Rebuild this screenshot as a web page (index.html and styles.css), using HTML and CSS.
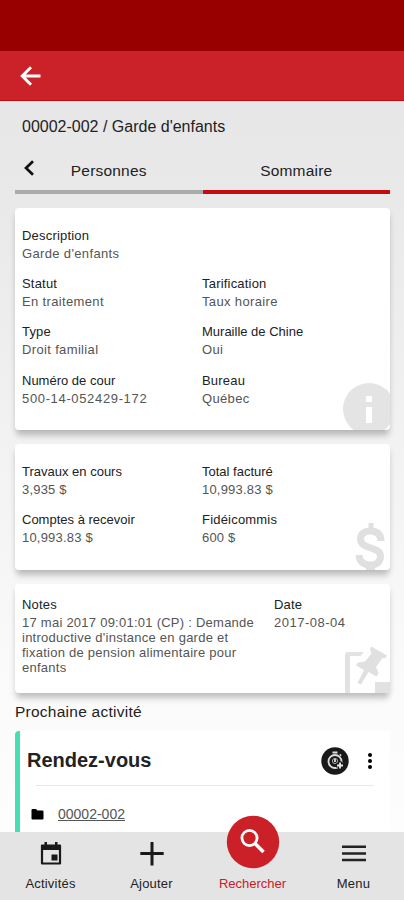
FILE: index.html
```html
<!DOCTYPE html>
<html lang="fr">
<head>
    <meta charset="UTF-8">
    <title>Garde d'enfants</title>
    <link rel="stylesheet" href="styles.css">
</head>
<body>
<div class="status"></div>
<div class="header">
    <svg width="22" height="22" viewBox="0 0 22 22"><path d="M20.5 11H2.500M11 2.200L2.200 11l8.800 8.800" fill="none" stroke="#fff" stroke-width="2.900"/></svg>
</div>

<div class="content">
    <h1>00002-002 / Garde d'enfants</h1>
    <div class="tabs">
        <svg class="prev" width="12" height="16" viewBox="0 0 12 16"><path d="M10 1.200L3 8l7 6.800" fill="none" stroke="#111" stroke-width="2.700"/></svg>
        <div class="tab">Personnes</div>
        <div class="tab active">Sommaire</div>
    </div>

    <div class="card infos">
        <div class="row"><dl><dt>Description</dt><dd>Garde d'enfants</dd></dl></div>
        <div class="row">
            <dl><dt>Statut</dt><dd>En traitement</dd></dl>
            <dl><dt>Tarification</dt><dd>Taux horaire</dd></dl>
        </div>
        <div class="row">
            <dl><dt>Type</dt><dd>Droit familial</dd></dl>
            <dl><dt class="tight">Muraille de Chine</dt><dd>Oui</dd></dl>
        </div>
        <div class="row">
            <dl><dt class="tight">Numéro de cour</dt><dd class="num">500-14-052429-172</dd></dl>
            <dl><dt>Bureau</dt><dd>Québec</dd></dl>
        </div>
        <svg class="mark" width="48" height="48" viewBox="0 0 48 48"><circle cx="27" cy="27" r="26" fill="#e4e4e4"/><path d="M24 14h6v6h-6zM24 25h6v16h-6z" fill="#fff"/></svg>
    </div>

    <div class="card money">
        <div class="row">
            <dl><dt class="tight">Travaux en cours</dt><dd class="amount">3,935 $</dd></dl>
            <dl><dt class="tight">Total facturé</dt><dd class="amount">10,993.83 $</dd></dl>
        </div>
        <div class="row">
            <dl><dt class="tight">Comptes à recevoir</dt><dd class="amount">10,993.83 $</dd></dl>
            <dl><dt>Fidéicommis</dt><dd class="amount">600 $</dd></dl>
        </div>
        <svg class="mark" width="36" height="48" viewBox="0 0 36 48"><path d="M17 1v7" stroke="#e0e0e0" stroke-width="5"/><path d="M27 19C27 12 23 9 16.500 9S6.500 12 6.500 17c0 11 20 7 20 17 0 6-4 9-10 9S5 40 5 33" fill="none" stroke="#e0e0e0" stroke-width="7"/><path d="M12 43h9v5h-9z" fill="#e0e0e0"/></svg>
    </div>

    <div class="card notes">
        <div class="row">
            <dl>
                <dt>Notes</dt>
                <dd>17 mai 2017 09:01:01 (CP) : Demande<br>introductive d'instance en garde et<br>fixation de pension alimentaire pour<br>enfants</dd>
            </dl>
            <dl><dt>Date</dt><dd>2017-08-04</dd></dl>
        </div>
        <svg class="mark" width="45" height="47" viewBox="0 0 45 47">
            <path d="M0 47V9q0-3 3-3h16l-3.500 4H5v37zM30 47V36h15v11z" fill="#e2e2e2"/>
            <path d="M26.500 0.500L42 9.500l-2 3-2.500-.5-6.500 9 2.500 6-2 3.500-8-4.500L16 38.500l-3.500-1.500L19 24l-8-4.500 2-3 7-1 6.500-8-1.500-4z" fill="#e0e0e0"/>
        </svg>
    </div>

    <h2>Prochaine activité</h2>
    <div class="event">
        <div class="event-head">
            <h3>Rendez-vous</h3>
            <svg width="28" height="28" viewBox="0 0 28 28">
                <circle cx="14" cy="14" r="13.700" fill="#191919"/>
                <circle cx="14" cy="14.500" r="6.500" fill="none" stroke="#ddd" stroke-width="1.800"/>
                <path d="M11.500 5.500h5M14 11v4M19 8.500l1-1" stroke="#ddd" stroke-width="1.800"/>
                <circle cx="14" cy="14" r="2.600" fill="none" stroke="#aaa" stroke-width="1"/>
                <path d="M19 14.500v8M15 18.500h8" stroke="#191919" stroke-width="4"/>
                <path d="M19 15.500v6M16 18.500h6" stroke="#eee" stroke-width="1.800"/>
            </svg>
            <svg class="dots" width="6" height="18" viewBox="0 0 6 18"><circle cx="3" cy="3" r="2"/><circle cx="3" cy="9" r="2"/><circle cx="3" cy="15" r="2"/></svg>
        </div>
        <div class="event-row">
            <svg width="13" height="11" viewBox="0 0 13 11"><path d="M1.500 0H5l1.500 1.500h5q1 0 1 1V9.500q0 1-1 1h-10q-1 0-1-1V1q0-1 1-1z"/></svg>
            <a>00002-002</a>
        </div>
    </div>
</div>

<div class="nav">
    <div class="item">
        <svg width="24" height="26" viewBox="0 0 24 26"><path d="M3 4.500h18v18H3z" fill="none" stroke="#191919" stroke-width="2.200" stroke-linejoin="round"/><path d="M2.500 4h19v5h-19zM5.500 1h2.500v4H5.500zM16 1h2.500v4H16zM12.500 13.500h6v6h-6z" fill="#191919"/></svg>
        <span>Activités</span>
    </div>
    <div class="item">
        <svg width="24" height="26" viewBox="0 0 24 26"><path d="M12 1v23.500M.3 12.500h23.400" stroke="#191919" stroke-width="3"/></svg>
        <span>Ajouter</span>
    </div>
    <div class="item search">
        <svg width="54" height="54" viewBox="0 0 54 54"><circle cx="27" cy="27" r="26.200" fill="#cb2028"/><circle cx="23.500" cy="23" r="7.600" fill="none" stroke="#fff" stroke-width="2.800"/><path d="M29 28.500l8.500 8.500" stroke="#fff" stroke-width="3.600"/></svg>
        <span>Rechercher</span>
    </div>
    <div class="item">
        <svg width="24" height="26" viewBox="0 0 24 26"><path d="M0 5.700h24M0 12.500h24M0 19h24" stroke="#222" stroke-width="2.600"/></svg>
        <span>Menu</span>
    </div>
</div>
</body>
</html>
```
FILE: styles.css
```css
*{
    margin: 0;
    padding: 0;
    box-sizing: border-box;
}
body{
    display: flex;
    flex-direction: column;
    height: 900px;
    overflow: hidden;
    font-family: "Liberation Sans", Arial, sans-serif;
    color: #222;
}
svg{
    display: block;
    flex: none;
}
.status{
    height: 51px;
    flex: none;
    background: #980000;
}
.header{
    height: 50px;
    flex: none;
    padding: 14px 0 0 20px;
    background: #cb2229;
    border-bottom: 1px solid #c20a12;
}
.content{
    flex: 1;
    min-height: 0;
    overflow: hidden;
    padding: 0 14px 0 15px;
    background: linear-gradient(#e7e7e7 0, #e9e9e9 100px, #f3f3f3 370px, #fbfbfb 600px, #fdfdfd 100%);
}
h1{
    height: 50px;
    padding-left: 7px;
    line-height: 51px;
    font-size: 16px;
    font-weight: normal;
    white-space: nowrap;
}
.tabs{
    display: flex;
    position: relative;
    height: 43px;
}
.prev{
    position: absolute;
    left: 8px;
    top: 9px;
}
.tab{
    flex: 1;
    line-height: 40px;
    text-align: center;
    font-size: 15.5px;
    letter-spacing: .2px;
    border-bottom: 4px solid #aaa;
}
.active{
    border-color: #c40c10;
}
.card{
    position: relative;
    margin-bottom: 14px;
    padding: 19px 7px 0;
    background: #fff;
    border-radius: 4px;
    box-shadow: 0 5px 6px -1px rgba(0,0,0,.22), 0 10px 6px -2px rgba(0,0,0,.05);
    font-size: 13px;
}
.infos{
    height: 222px;
    margin-top: 14px;
}
.money{
    height: 126px;
    padding-top: 19px;
}
.notes{
    height: 109px;
    padding-top: 12px;
}
.row{
    display: flex;
    height: 48.2px;
}
.row dl{
    flex: none;
    width: 180px;
    white-space: nowrap;
}
dt{
    height: 18px;
    line-height: 18px;
    letter-spacing: .2px;
}
.tight{
    letter-spacing: 0;
}
dd{
    line-height: 18px;
    letter-spacing: .35px;
    color: #555;
}
.num{
    letter-spacing: .65px;
}
.amount{
    letter-spacing: .2px;
}
.notes dl:first-child{
    width: 252px;
}
.notes dd{
    padding-top: 1px;
    line-height: 15px;
    letter-spacing: .25px;
}
.notes dl:last-child dd{
    letter-spacing: .5px;
}
.mark{
    position: absolute;
    right: 0;
    bottom: 0;
}
h2{
    position: relative;
    height: 24px;
    line-height: 10px;
    font-size: 15.5px;
    letter-spacing: .25px;
    font-weight: normal;
}
.event{
    height: 120px;
    padding-left: 7px;
    background: #fff;
    border-left: 5px solid #46dfb4;
    border-radius: 4px 0 0 0;
}
.event-head{
    display: flex;
    align-items: center;
    height: 55px;
    padding: 4px 17px 0 0;
    background: linear-gradient(#e8e8e8, #e8e8e8) 9px 100% / 338px 1px no-repeat;
}
h3{
    flex: 1;
    font-size: 20px;
}
.dots{
    margin-left: 18px;
}
.event-row{
    display: flex;
    align-items: center;
    height: 56px;
    padding-left: 4px;
}
.event-row a{
    margin-left: 14px;
    font-size: 14px;
    color: #555;
    text-decoration: underline;
}
.nav{
    display: flex;
    flex: none;
    position: relative;
    height: 68px;
    background: #e4e4e4;
}
.item{
    display: flex;
    flex-direction: column;
    justify-content: space-between;
    align-items: center;
    width: 101px;
    height: 60px;
    padding-top: 9px;
    font-size: 13px;
    letter-spacing: .2px;
}
.item span{
    line-height: 16px;
}
.search{
    height: 77px;
    margin-top: -17px;
    padding-top: 0;
    color: #cb2028;
    letter-spacing: 0;
}
```
